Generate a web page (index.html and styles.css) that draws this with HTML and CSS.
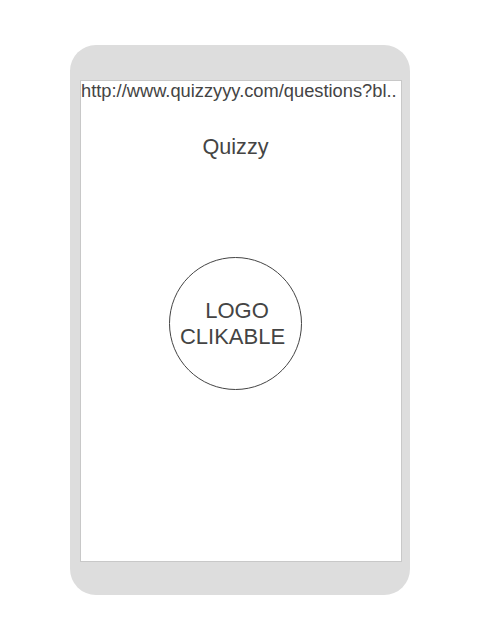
FILE: index.html
```html
<!DOCTYPE html>
<html lang="pt-BR">
<head>
<meta charset="UTF-8" />
<title>Quizzy</title>
<link rel="stylesheet" href="styles.css">
</head>
<body>
<div class="phone">
  <div class="screen">
    <div class="url">http://www.quizzyyy.com/questions?bl..</div>
    <h1 class="title">Quizzy</h1>
    <a class="logo">
      <span class="logo-line first">LOGO</span>
      <span class="logo-line second">CLIKABLE</span>
    </a>
  </div>
</div>
</body>
</html>
```

FILE: styles.css
```css
body { margin: 0; background: #fff; font-family: "Liberation Sans", Arial, sans-serif; color: #444; }

.phone { box-sizing: border-box; width: 340px; height: 550px; margin: 45px 0 0 70px; padding: 35px 8px 33px 10px; background: #dddddd; border-radius: 26px; }

.screen { box-sizing: border-box; height: 482px; background: #fff; border: 1px solid #c8c8c8; display: flex; flex-direction: column; align-items: center; overflow: hidden; }

.url { align-self: stretch; font-size: 18.3px; line-height: 20px; white-space: nowrap; }

.title { margin: 33px 0 0 -11px; font-size: 21.6px; font-weight: normal; line-height: 26px; }

.logo { box-sizing: border-box; margin: 97px 0 0 -11px; width: 133px; height: 133px; border: 1px solid #444; border-radius: 50%; display: flex; flex-direction: column; align-items: center; justify-content: center; cursor: pointer; }

.logo-line { font-size: 22px; line-height: 26px; white-space: nowrap; }

.logo-line.first { margin-left: 3px; }

.logo-line.second { margin-right: 6px; }
```
